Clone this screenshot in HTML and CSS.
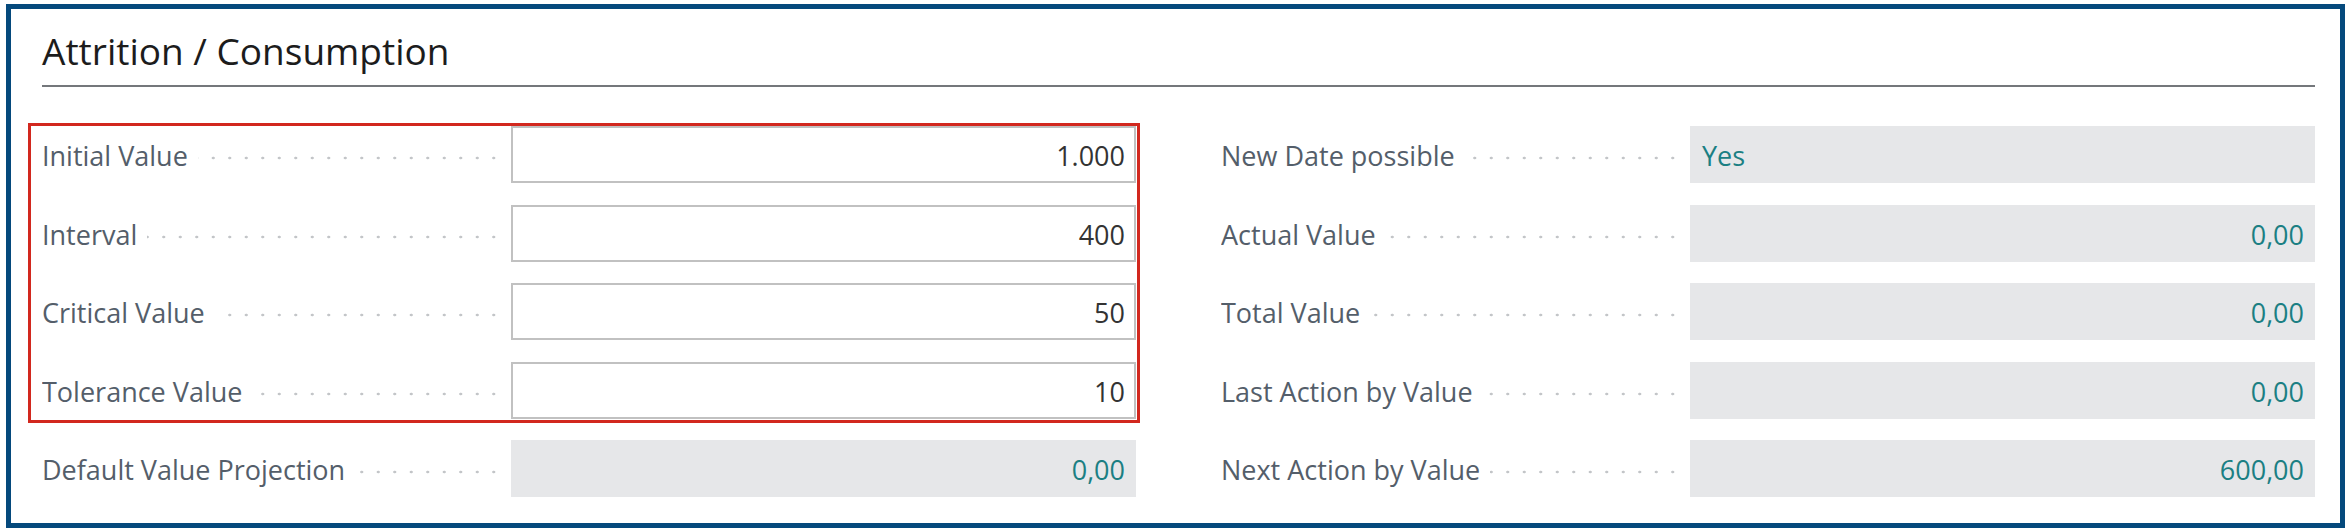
FILE: index.html
```html
<!DOCTYPE html>
<html lang="en">
<head>
<meta charset="utf-8">
<title>Attrition / Consumption</title>
<link rel="stylesheet" href="styles.css">
</head>
<body>
<div class="frame">
  <section class="section">
    <h2 class="section-title">Attrition / Consumption</h2>
    <div class="grid">
      <div class="col">
        <div class="highlight">
          <div class="field">
            <div class="caption"><span>Initial Value</span></div>
            <div class="input">1.000</div>
          </div>
          <div class="field">
            <div class="caption"><span>Interval</span></div>
            <div class="input">400</div>
          </div>
          <div class="field">
            <div class="caption"><span>Critical Value</span></div>
            <div class="input">50</div>
          </div>
          <div class="field">
            <div class="caption"><span>Tolerance Value</span></div>
            <div class="input">10</div>
          </div>
        </div>
        <div class="field">
          <div class="caption"><span>Default Value Projection</span></div>
          <div class="readonly num">0,00</div>
        </div>
      </div>
      <div class="col">
        <div class="field">
          <div class="caption"><span>New Date possible</span></div>
          <div class="readonly text">Yes</div>
        </div>
        <div class="field">
          <div class="caption"><span>Actual Value</span></div>
          <div class="readonly num">0,00</div>
        </div>
        <div class="field">
          <div class="caption"><span>Total Value</span></div>
          <div class="readonly num">0,00</div>
        </div>
        <div class="field">
          <div class="caption"><span>Last Action by Value</span></div>
          <div class="readonly num">0,00</div>
        </div>
        <div class="field">
          <div class="caption"><span>Next Action by Value</span></div>
          <div class="readonly num">600,00</div>
        </div>
      </div>
    </div>
  </section>
</div>
</body>
</html>
```
FILE: styles.css
```css
html, body {
  margin: 0;
  padding: 0;
  background: #ffffff;
}

body {
  font-family: "Open Sans", "Noto Sans", sans-serif;
  color: #212121;
}

.frame {
  margin: 4px 3px 3px 6px;
  border: 5px solid #05497c;
  padding: 20px 25px 26px 31px;
  background: #ffffff;
}

.section-title {
  margin: 0;
  font-size: 37px;
  font-weight: 400;
  line-height: 44px;
  color: #1c1c1c;
  padding-bottom: 12px;
  border-bottom: 2px solid #74777b;
}

.grid {
  margin-top: 39px;
  display: grid;
  grid-template-columns: 1fr 1fr;
  column-gap: 85px;
}

.col {
  display: flex;
  flex-direction: column;
  gap: 21.5px;
}

.highlight {
  position: relative;
  display: flex;
  flex-direction: column;
  gap: 21.5px;
}

.highlight::after {
  content: "";
  position: absolute;
  top: -3px;
  right: -4px;
  bottom: -4px;
  left: -14px;
  border: 3px solid #d2281e;
  pointer-events: none;
}

.field {
  display: grid;
  grid-template-columns: 469px 1fr;
  height: 57px;
}

.caption {
  box-sizing: border-box;
  height: 57px;
  padding: 2px 9px 0 0;
  font-size: 27px;
  line-height: 55px;
  color: #545e6a;
  white-space: nowrap;
  overflow: hidden;
  background-image: radial-gradient(circle, #c3c5c8 1.1px, rgba(255,255,255,0) 1.7px);
  background-size: 16.5px 4px;
  background-repeat: repeat-x;
  background-position: right top 28px;
  background-origin: content-box;
  background-clip: content-box;
}

.caption span {
  background: #ffffff;
  padding-right: 10px;
}

.input {
  box-sizing: border-box;
  height: 57px;
  border: 2px solid #c1c1c1;
  padding: 2px 9px 0 9px;
  font-size: 27px;
  line-height: 51px;
  text-align: right;
  color: #333333;
  background: #ffffff;
}

.readonly {
  box-sizing: border-box;
  height: 57px;
  background: #e6e7e9;
  padding: 2px 11px 0 12px;
  font-size: 27px;
  line-height: 55px;
  color: #1b7f83;
}

.readonly.num {
  text-align: right;
}

.readonly.text {
  text-align: left;
}
```
